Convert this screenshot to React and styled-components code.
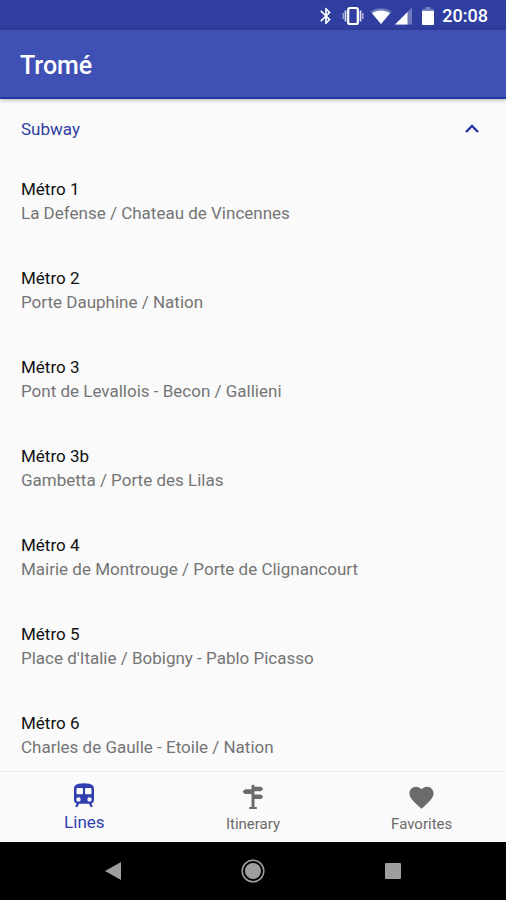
import React, {useState} from 'react';
import styled, {createGlobalStyle} from 'styled-components';
import {MdBluetooth, MdFavorite} from 'react-icons/md';

const GlobalStyle = createGlobalStyle`
    *, *::before, *::after {
        box-sizing: border-box;
    }

    body {
        margin: 0;
        background: #fafafa;
        font-family: Roboto, "Liberation Sans", sans-serif;
    }

    button {
        padding: 0;
        border: 0;
        background: none;
        font: inherit;
        cursor: pointer;
    }
`;

const Screen = styled.div`
    display: flex;
    flex-direction: column;
    height: 100vh;
`;

const StatusBar = styled.div`
    display: flex;
    flex: none;
    align-items: center;
    justify-content: flex-end;
    gap: 8px;
    height: 30px;
    padding: 2px 18px 0 0;
    background: #303f9f;
    color: #fff;

    svg {
        display: block;
    }
`;

const StatusIcons = styled.div`
    display: flex;
    align-items: center;
    gap: 6px;
`;

const NetworkIcons = styled.div`
    display: flex;
    align-items: center;
    gap: 3px;
    margin-right: 4px;
`;

const Clock = styled.time`
    font-size: 18px;
    font-weight: 500;
    line-height: 24px;
`;

const AppBar = styled.header`
    display: flex;
    flex: none;
    align-items: center;
    height: 69px;
    padding: 4px 20px 0;
    border-bottom: 2px solid #1f37a5;
    background: #3f51b5;
    box-shadow: 0 1px 4px rgba(0, 0, 0, 0.3);
    z-index: 1;
`;

const Title = styled.h1`
    margin: 0;
    color: #fff;
    font-size: 25px;
    font-weight: 500;
    line-height: 32px;
`;

const Content = styled.main`
    flex: 1;
    min-height: 0;
    overflow-y: auto;
    scrollbar-width: none;
`;

const SectionToggle = styled.button`
    display: flex;
    align-items: center;
    justify-content: space-between;
    width: 100%;
    height: 58px;

    && {
        padding: 2px 26px 0 21px;
        color: #303f9f;
        font-size: 17px;
        line-height: 24px;
    }

    svg {
        transform: ${({$open}) => ($open ? 'none' : 'rotate(180deg)')};
    }
`;

const LineList = styled.ul`
    margin: 0;
    padding: 0;
    list-style: none;
`;

const LineItem = styled.li`
    padding: 20px 21px 21px;
    font-size: 17px;
    line-height: 24px;
`;

const LineName = styled.div`
    color: #111;
`;

const LineRoute = styled.div`
    color: #757575;
`;

const TabBar = styled.nav`
    display: flex;
    flex: none;
    height: 71px;
    border-top: 1px solid #ececec;
    background: #fafafa;
`;

const Tab = styled.button`
    display: flex;
    flex: 1;
    flex-direction: column;
    align-items: center;
    justify-content: flex-start;

    && {
        padding-top: ${({$active}) => ($active ? '8px' : '10px')};
        color: ${({$active}) => ($active ? '#303fb0' : '#6b6b6b')};
        font-size: ${({$active}) => ($active ? '17px' : '15px')};
        line-height: 24px;
    }
`;

const TabIcon = styled.span`
    display: grid;
    place-items: center;
    height: 30px;
`;

const SystemBar = styled.footer`
    display: flex;
    flex: none;
    align-items: center;
    justify-content: center;
    gap: 92px;
    height: 58px;
    background: #000;
`;

const SystemButton = styled.button`
    display: grid;
    place-items: center;
    width: 48px;
    height: 48px;
`;

const VibrateIcon = () => (
    <svg width="22" height="20" viewBox="0 0 22 20" fill="none" aria-hidden="true">
        <rect x="6.200" y="2" width="9.600" height="16" rx="1.5" stroke="#fff" strokeWidth="2.2" />
        <path d="M3.500 4.500v11M18.500 4.500v11" stroke="#fff" strokeOpacity=".8" strokeWidth="1.8" />
        <path d="M1.200 7v6M20.800 7v6" stroke="#fff" strokeOpacity=".5" strokeWidth="1.6" />
    </svg>
);

const WifiIcon = () => (
    <svg width="22" height="18" viewBox="0 0 22 18" aria-hidden="true">
        <path d="M11 17 .5 4.500C6 0 16 0 21.500 4.500Z" fill="#fff" fillOpacity=".3" />
        <path d="M11 17 2 6.200c5.500-3.700 12.500-3.700 18 0Z" fill="#fff" />
    </svg>
);

const SignalIcon = () => (
    <svg width="17" height="18" viewBox="0 0 17 18" aria-hidden="true">
        <path d="M0 17.500 17 .5v17Z" fill="#fff" fillOpacity=".3" />
        <path d="M0 17.500 12.500 5v12.500Z" fill="#fff" />
    </svg>
);

const BatteryIcon = () => (
    <svg width="12" height="19" viewBox="0 0 12 19" aria-hidden="true">
        <path d="M3.500 0h5v2H12v3H0V2h3.500Z" fill="#fff" fillOpacity=".35" />
        <path d="M0 4h12v13a1 1 0 0 1-1 1H1a1 1 0 0 1-1-1Z" fill="#fff" />
    </svg>
);

const ChevronIcon = () => (
    <svg width="16" height="10" viewBox="0 0 16 10" fill="none" aria-hidden="true">
        <path d="m2 8 6-6 6 6" stroke="#2637a4" strokeWidth="2.400" />
    </svg>
);

const TrainIcon = () => (
    <svg width="22" height="25" viewBox="0 0 22 25" fill="currentColor" aria-hidden="true">
        <path
            fillRule="evenodd"
            d="M5.500.8C9 0 13 0 16.500.8 19.300 1.400 21 3 21 5.500v11.300c0 2-1 3.400-2.600 3.700l1.400 3.500h-2.300L16 20.700H6L4.500 24H2.200l1.400-3.500C2 20.200 1 18.800 1 16.800V5.500C1 3 2.700 1.400 5.500.8ZM4.500 5a1 1 0 0 0-1 1v4.300a1 1 0 0 0 1 1H9a1 1 0 0 0 1-1V6a1 1 0 0 0-1-1ZM13 5a1 1 0 0 0-1 1v4.300a1 1 0 0 0 1 1h4.500a1 1 0 0 0 1-1V6a1 1 0 0 0-1-1ZM5.500 14.200a2.200 2.200 0 1 0 0 4.400 2.200 2.200 0 0 0 0-4.400ZM16.500 14.200a2.200 2.200 0 1 0 0 4.400 2.200 2.200 0 0 0 0-4.400Z"
        />
    </svg>
);

const SignpostIcon = () => (
    <svg width="24" height="26" viewBox="0 0 24 26" fill="currentColor" aria-hidden="true">
        <path d="M10.500 1.500 12 .5l1.500 1V23h2.300v2H8.200v-2h2.300Z" />
        <path d="M12 2.800h8l2.300 2.200L20 7.200h-8ZM12 5.300H4L1.500 7.700 4 10.100h8ZM12 10.500h8l2.300 2.200-2.300 2.200h-8Z" />
    </svg>
);

const LINES = [
    {name: 'Métro 1', route: 'La Defense / Chateau de Vincennes'},
    {name: 'Métro 2', route: 'Porte Dauphine / Nation'},
    {name: 'Métro 3', route: 'Pont de Levallois - Becon / Gallieni'},
    {name: 'Métro 3b', route: 'Gambetta / Porte des Lilas'},
    {name: 'Métro 4', route: 'Mairie de Montrouge / Porte de Clignancourt'},
    {name: 'Métro 5', route: "Place d'Italie / Bobigny - Pablo Picasso"},
    {name: 'Métro 6', route: 'Charles de Gaulle - Etoile / Nation'},
];

const TABS = [
    {label: 'Lines', icon: <TrainIcon />},
    {label: 'Itinerary', icon: <SignpostIcon />},
    {label: 'Favorites', icon: <MdFavorite size={29} />},
];

export default function App() {
    const [open, setOpen] = useState(true);
    const [tab, setTab] = useState('Lines');

    return (
        <Screen>
            <GlobalStyle />
            <StatusBar>
                <StatusIcons>
                    <MdBluetooth size={20} />
                    <VibrateIcon />
                    <NetworkIcons>
                        <WifiIcon />
                        <SignalIcon />
                    </NetworkIcons>
                    <BatteryIcon />
                </StatusIcons>
                <Clock>20:08</Clock>
            </StatusBar>
            <AppBar>
                <Title>Tromé</Title>
            </AppBar>
            <Content>
                <SectionToggle $open={open} aria-expanded={open} onClick={() => setOpen(!open)}>
                    Subway
                    <ChevronIcon />
                </SectionToggle>
                {open && (
                    <LineList>
                        {LINES.map(({name, route}) => (
                            <LineItem key={name}>
                                <LineName>{name}</LineName>
                                <LineRoute>{route}</LineRoute>
                            </LineItem>
                        ))}
                    </LineList>
                )}
            </Content>
            <TabBar>
                {TABS.map(({label, icon}) => (
                    <Tab key={label} $active={label === tab} onClick={() => setTab(label)}>
                        <TabIcon>{icon}</TabIcon>
                        {label}
                    </Tab>
                ))}
            </TabBar>
            <SystemBar>
                <SystemButton aria-label="Back">
                    <svg width="16" height="18" viewBox="0 0 16 18" aria-hidden="true">
                        <path d="M0 9 16 0v18Z" fill="#9e9e9e" />
                    </svg>
                </SystemButton>
                <SystemButton aria-label="Home">
                    <svg width="24" height="24" viewBox="0 0 24 24" aria-hidden="true">
                        <circle cx="12" cy="12" r="10.800" fill="none" stroke="#9e9e9e" strokeWidth="1.500" />
                        <circle cx="12" cy="12" r="8" fill="#9e9e9e" />
                    </svg>
                </SystemButton>
                <SystemButton aria-label="Recent apps">
                    <svg width="16" height="16" viewBox="0 0 16 16" aria-hidden="true">
                        <rect width="16" height="16" rx="1" fill="#9e9e9e" />
                    </svg>
                </SystemButton>
            </SystemBar>
        </Screen>
    );
}
